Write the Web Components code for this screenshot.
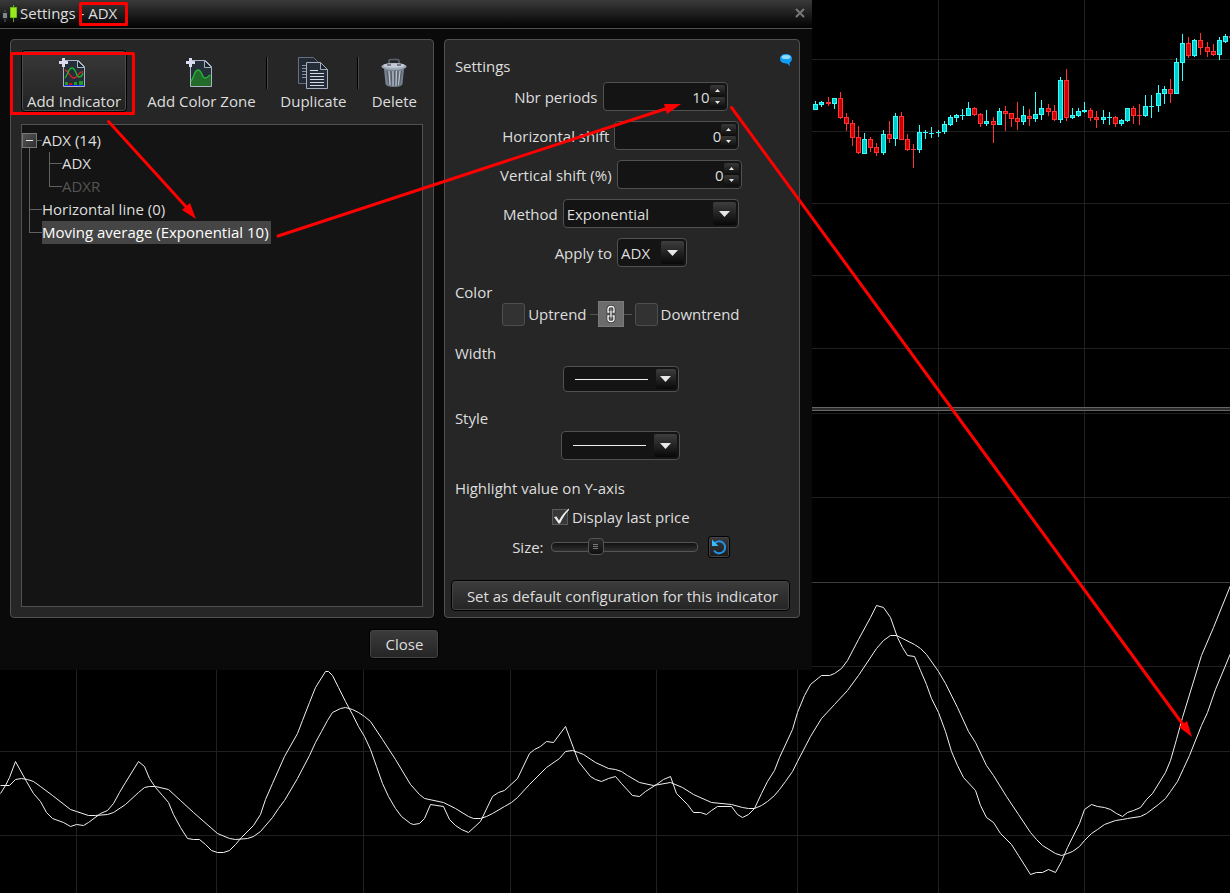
<!DOCTYPE html>
<html lang="en">
<head>
<meta charset="utf-8">
<meta name="viewport" content="width=device-width, initial-scale=1">
<title>Settings - ADX</title>
<style>
  :root {
    --edge: #515151;
    --panel: #262626;
    --well: #141414;
    --text: #dedede;
    --mark: #ff0000;
  }
  html, body { margin: 0; min-height: 100vh; background: #000; }
  body {
    position: relative;
    overflow: hidden;
    color: var(--text);
    font: 15px/20px "Open Sans", "Noto Sans", sans-serif;
  }
</style>
</head>
<body>
<price-chart></price-chart>
<settings-dialog></settings-dialog>
<note-layer></note-layer>

<script>
const define = (name, html, setup) => {
  const tpl = document.createElement('template');
  tpl.innerHTML = html;
  customElements.define(name, class extends HTMLElement {
    constructor() {
      super();
      this.attachShadow({ mode: 'open' }).append(tpl.content.cloneNode(true));
    }
    connectedCallback() {
      if (setup && !this.ready) { this.ready = true; setup(this, this.shadowRoot); }
    }
  });
};

/* ---------- chart behind the dialog ---------- */
// x, high, top, bottom, low, direction (1 = up)
const CANDLES = [
  [815,101,104,110,110,1],[821,101,102,105,107,1],[828,97,102,104,106,0],[834,98,98,104,109,1],[840,92,98,118,119,0],
  [846,113,117,124,131,0],[852,120,123,138,146,0],[858,126,137,153,154,0],[864,133,139,154,154,1],[870,137,139,148,152,0],
  [876,143,147,153,156,0],[883,130,134,153,155,1],[889,121,134,139,143,0],[895,113,116,139,146,1],[901,112,116,140,140,0],
  [907,134,139,150,151,0],[913,144,149,150,168,0],[919,125,132,150,153,1],[925,130,132,133,139,1],[931,127,133,134,138,1],
  [938,130,132,133,137,1],[944,121,124,132,134,1],[950,115,117,125,126,1],[956,114,115,118,122,1],[962,109,115,116,120,1],
  [968,102,108,116,116,1],[974,107,108,115,116,0],[980,113,114,124,127,0],[986,110,121,124,126,1],[993,117,121,125,143,0],
  [999,108,111,125,125,1],[1005,106,111,114,131,0],[1011,113,113,119,127,0],[1017,102,118,122,130,0],
  [1023,106,115,122,125,1],[1029,109,116,119,126,0],[1035,92,114,119,122,1],[1041,100,108,115,120,1],[1048,104,108,112,116,0],
  [1054,105,111,120,121,0],[1060,77,80,120,123,1],[1066,69,80,118,121,0],[1072,108,115,118,119,1],[1078,108,111,116,117,1],
  [1084,102,110,112,113,1],[1090,108,110,118,121,0],[1096,111,117,120,128,0],[1103,110,117,120,124,1],[1109,112,117,118,125,1],
  [1115,116,117,124,127,0],[1121,119,120,124,126,1],[1127,108,108,121,122,1],[1133,106,108,116,124,0],[1139,104,115,116,125,0],
  [1145,95,106,116,117,1],[1151,95,106,107,118,1],[1158,85,93,106,112,1],[1164,86,89,94,104,1],[1170,79,89,94,103,0],
  [1176,58,62,94,94,1],[1182,34,43,63,81,1],[1188,37,43,56,58,0],[1194,39,40,56,57,1],[1200,33,40,48,55,0],
  [1207,42,47,52,57,0],[1213,44,51,55,56,0],[1219,37,40,55,60,1],[1225,34,36,42,43,1],[1231,36,36,38,38,0]
];
const ADX = '0,793 5,785 9,777 15,761 26,781 33,793 40,801 46,812 52,818 63,822 70,826 76,824 83,825 88,822 100,813 107,810 113,803 119,792 125,782 138,761 144,766 149,778 155,787 162,795 168,802 173,814 180,827 187,838 193,839 199,839 205,844 211,850 217,852 223,852 229,850 235,844 241,837 253,825 260,814 265,799 272,783 284,756 297,733 302,720 309,702 315,687 325,671 328,671 332,675 338,687 345,701 352,714 358,726 364,736 370,749 376,766 382,783 388,796 395,808 401,816 410,823 413,824 419,823 424,818 430,804 443,806 449,819 455,825 461,829 468,832 480,821 492,796 498,792 504,790 517,778 529,753 534,749 540,746 546,741 553,742 565,726 578,761 590,776 595,779 601,781 608,778 615,776 621,783 632,795 639,796 645,791 656,784 663,779 670,776 676,793 687,804 693,812 700,812 706,814 711,810 717,806 731,806 737,814 742,817 748,814 754,808 761,793 767,781 774,770 779,757 792,729 797,712 804,695 810,684 821,675 829,675 834,673 841,668 847,660 858,639 870,617 876,605 883,607 890,617 897,637 902,647 907,655 914,656 920,670 926,684 931,698 938,712 945,731 951,751 957,765 963,777 975,790 980,805 986,817 993,822 1000,833 1011,844 1018,855 1030,874 1036,872 1042,872 1048,869 1055,872 1061,861 1067,847 1079,823 1084,809 1091,804 1097,806 1104,807 1110,809 1116,813 1122,816 1127,812 1133,810 1140,807 1146,799 1152,793 1165,772 1170,760 1176,739 1182,717 1201,655 1213,627 1230,585';
const AVERAGE = '0,785 9,785 15,779 21,778 27,779 33,781 40,786 52,795 70,809 76,811 88,815 95,815 107,814 113,812 125,804 138,792 144,787 149,786 155,786 168,789 180,800 193,812 217,833 229,838 235,839 247,838 253,836 260,831 272,817 278,808 284,800 297,778 309,755 315,742 321,731 327,720 332,712 340,708 345,707 352,709 358,712 364,716 370,721 382,739 395,759 410,784 419,794 424,798 443,802 455,808 468,816 473,818 480,818 486,816 492,813 504,806 511,802 517,797 529,784 546,767 559,758 565,751 572,750 578,752 583,754 595,762 608,768 615,769 621,771 627,775 639,782 653,785 670,782 682,787 693,794 711,802 731,804 742,807 748,808 754,808 761,805 767,801 774,795 779,789 785,781 792,771 797,761 810,736 821,718 834,704 847,690 858,675 876,648 883,640 890,635 896,635 902,638 914,644 920,648 926,654 938,671 945,683 957,707 968,731 975,742 986,765 993,775 1006,796 1018,814 1030,832 1036,839 1042,845 1055,853 1061,855 1067,853 1072,851 1079,846 1084,840 1091,833 1097,829 1104,824 1115,820 1122,819 1127,818 1140,816 1146,813 1158,804 1165,798 1170,791 1177,781 1183,768 1189,755 1201,725 1207,712 1215,689 1230,653';

define('price-chart', `
  <style>
    :host { position: absolute; inset: 0; display: block; }
    svg { display: block; width: 100%; height: 100%; }
  </style>
  <svg viewBox="0 0 1230 893" preserveAspectRatio="xMinYMin slice" role="img" aria-label="Price and ADX chart">
    <g id="grid" fill="#202020"></g>
    <rect x="812" y="407" width="418" height="1" fill="#666"/>
    <rect x="812" y="408" width="418" height="2" fill="#2c2c2c"/>
    <rect x="812" y="410" width="418" height="1" fill="#666"/>
    <g id="candles"></g>
    <g fill="none" stroke="#f0f0f0" stroke-width="1" transform="translate(.5 .5)">
      <polyline points="${ADX}"/><polyline points="${AVERAGE}"/>
    </g>
  </svg>`, (host, root) => {
  const bar = (x, y, w, h, fill) => `<rect x="${x}" y="${y}" width="${w}" height="${h}"${fill ? ` fill="${fill}"` : ''}/>`;
  root.getElementById('grid').innerHTML =
    [76,216,363,510,656,797,938,1084].map(x => bar(x, 0, 1, 893)).join('') +
    [59,131,203,275,348,413,497,666,751,835].map(y => bar(0, y, 1230, 1)).join('') +
    bar(812, 582, 418, 1, '#3c3c3c');
  root.getElementById('candles').innerHTML = CANDLES.map(([x, h, t, b, l, up]) => {
    const edge = up ? '#33ffff' : '#ff3333', fill = up ? '#00cccc' : '#cc0000';
    return bar(x, h, 1, l - h, edge) + bar(x - 2, t, 5, b - t, edge) +
      (b - t > 2 ? bar(x - 1, t + 1, 3, b - t - 2, fill) : '');
  }).join('');
});

/* ---------- red notes over everything ---------- */
define('note-layer', `
  <style>
    :host { position: absolute; inset: 0; display: block; pointer-events: none; }
    svg { display: block; width: 100%; height: 100%; }
  </style>
  <svg viewBox="0 0 1230 893" preserveAspectRatio="xMinYMin slice" aria-hidden="true">
    <g fill="none" stroke="#f00" stroke-width="3" stroke-linejoin="round" stroke-linecap="round">
      <rect x="80.500" y="3.500" width="46" height="21"/>
      <rect x="11.500" y="53.500" width="122" height="60"/>
      <path d="M108.500 121.500L188 209M278 236L668 108M731.500 107.500L1184 726"/>
    </g>
    <g fill="#f00">
      <path d="M196 219L182 210L190 203z"/>
      <path d="M681 104L667 114L664 104z"/>
      <path d="M1192 737L1179 727L1187 721z"/>
    </g>
  </svg>`);

/* ---------- shared pieces ---------- */
define('group-panel', `
  <style>
    :host {
      display: flex; flex-direction: column; box-sizing: border-box; min-width: 0;
      background: var(--panel); border: 1px solid var(--edge); border-radius: 4px;
    }
  </style>
  <slot></slot>`);

define('push-button', `
  <style>
    :host { display: block; }
    button {
      width: 100%; height: var(--button-height, 31px); padding: 0 15px; cursor: pointer;
      font: inherit; color: inherit; white-space: nowrap;
      background: linear-gradient(#3c3c3c, #242424);
      border: 1px solid #000; border-radius: 4px;
      box-shadow: inset 0 0 0 1px #444;
    }
  </style>
  <button type="button"><slot></slot></button>`);

define('tool-button', `
  <style>
    :host { display: block; position: relative; }
    button {
      display: flex; flex-direction: column; align-items: center; gap: 2px;
      width: 100%; height: 62px; padding: 6px 0 0; cursor: pointer;
      font: inherit; color: inherit; white-space: nowrap;
      background: none; border: 1px solid transparent; border-radius: 4px;
    }
    :host([active]) button {
      background: linear-gradient(#383838, #222);
      border-color: #000; box-shadow: inset 0 0 0 1px #4c4c4c;
    }
    :host([divided])::after {
      content: ""; position: absolute; right: 0; top: 7px; width: 1px; height: 32px;
      background: #000; border-right: 1px solid #484848;
    }
    ::slotted(svg) { display: block; width: 32px; height: 32px; }
  </style>
  <button type="button"><slot name="icon"></slot><slot></slot></button>`);

define('tool-bar', `
  <style>
    :host { display: grid; grid-template-columns: 106fr 141fr 91fr 71fr; padding: 10px 3px 0 10px; }
    .zone { padding-left: 8px; }
  </style>
  <tool-button active>
    <svg slot="icon" viewBox="2 0 32 32">
      <path d="M7.500 3.500h15l6 6v20h-21z" fill="#242f3a" stroke="#a9b4c4"/>
      <path d="M21.500 3.500v7h7z" fill="#1a222b" stroke="#a9b4c4"/>
      <path d="M9 13c4 1 5 8 9 8s4-7 9-6" fill="none" stroke="#d22" stroke-width="1.300"/>
      <path d="M9 21c3-3 3-10 7-10s4 9 7 9 3-2 4-4" fill="none" stroke="#1fb52a" stroke-width="1.300"/>
      <path d="M9 25h3v3H9zM18 25h3v3h-3zM23 24h4v4h-4z" fill="#18a022"/>
      <path d="M13 26h3v2h-3z" fill="#c11"/><path d="M8 28h20v1H8z" fill="#22f"/>
      <path d="M6 1h3v3h3v3H9v3H6V7H3V4h3z" fill="#dadaf0"/>
    </svg>Add Indicator</tool-button>
  <tool-button divided class="zone">
    <svg slot="icon" viewBox="2 0 32 32">
      <path d="M7.500 3.500h15l6 6v20h-21z" fill="#242f3a" stroke="#a9b4c4"/>
      <path d="M21.500 3.500v7h7z" fill="#1a222b" stroke="#a9b4c4"/>
      <path d="M8 24c3-3 3-11 7-11s4 8 7 8 3-2 5-3l1-1v12H8z" fill="#246b2b"/>
      <path d="M8 24c3-3 3-11 7-11s4 8 7 8 3-2 5-3" fill="none" stroke="#25b735" stroke-width="1.300"/>
      <path d="M6 1h3v3h3v3H9v3H6V7H3V4h3z" fill="#dadaf0"/>
    </svg>Add Color Zone</tool-button>
  <tool-button divided>
    <svg slot="icon" viewBox="0 0 32 32">
      <path d="M1.500.500h15l4 4v22h-19z" fill="#222a33" stroke="#667080"/>
      <path d="M5 8.500h6M5 11.500h6M5 14.500h6M5 17.500h6M5 20.500h6" stroke="#8a929e"/>
      <path d="M9.500 5.500h14l7 7v19h-21z" fill="#242d38" stroke="#a4afbf"/>
      <path d="M23.500 5.500v7h7z" fill="#1a222b" stroke="#a4afbf"/>
      <path d="M13 13.500h8M13 16.500h14M13 19.500h14M13 22.500h14M13 25.500h14M13 28.500h14" stroke="#d5d9e6"/>
    </svg>Duplicate</tool-button>
  <tool-button>
    <svg slot="icon" viewBox="0 0 32 32">
      <path d="M11 7V4q0-1.500 2-1.500h6q2 0 2 1.500v3" fill="none" stroke="#59616e" stroke-width="1.600"/>
      <path d="M6 12h20l-1.500 15q-1 3-8.500 3t-8.500-3z" fill="#77818e"/>
      <path d="M9 14l2 14M13 14l1 15M16.500 14v15M20 14l-1 15M23.500 14l-2 14" stroke="#56606d" stroke-width="1.200"/>
      <path d="M11 14l1 14M15 14v15M18.500 14l-.500 15M22 14l-1.500 14" stroke="#c1c9d3"/>
      <ellipse cx="16" cy="9.500" rx="12.500" ry="3.600" fill="#9ca8b5"/>
      <ellipse cx="16" cy="8.500" rx="10.500" ry="2.300" fill="#c3ccd5"/>
      <path d="M9 8h4M19 8h4" stroke="#625878" stroke-width="1.500"/>
    </svg>Delete</tool-button>`);

/* ---------- tree of indicators ---------- */
define('indicator-tree', `
  <style>
    :host {
      display: block; flex: 1; margin: 12px 10px 10px; padding-top: 4px;
      background: var(--well); border: 1px solid var(--edge);
    }
    ul { list-style: none; margin: 0; padding: 0; }
    li { position: relative; line-height: 23px; }
    .top { padding-left: 20px; }
    .sub { padding-left: 20px; }
    /* connector lines */
    li::before { content: ""; position: absolute; left: 7px; top: 11px; width: 13px; border-top: 1px solid #616161; }
    li::after { content: ""; position: absolute; left: 7px; top: 0; bottom: 0; border-left: 1px solid #616161; }
    li:last-child::after { bottom: auto; height: 11px; }
    .open::after { top: 18px; }
    button {
      position: absolute; z-index: 1; left: 0; top: 4px; width: 15px; height: 15px; padding: 0;
      background: linear-gradient(135deg, #555, #2e2e2e); border: 1px solid #777;
    }
    button::before { content: ""; display: block; width: 7px; height: 1px; margin: 0 auto; background: #eee; }
    .off { color: #555; }
    .picked { display: inline-block; padding-right: 2px; color: #fff; background: #454545; }
  </style>
  <ul>
    <li class="top open"><button type="button" aria-label="Collapse"></button>ADX (14)
      <ul><li class="sub">ADX</li><li class="sub off">ADXR</li></ul>
    </li>
    <li class="top">Horizontal line (0)</li>
    <li class="top"><span class="picked">Moving average (Exponential 10)</span></li>
  </ul>`);

/* ---------- form fields ---------- */
define('spin-field', `
  <style>
    :host { display: flex; justify-content: center; align-items: center; gap: 5px; }
    .box {
      display: flex; box-sizing: border-box; width: 125px; height: 29px; padding: 2px;
      background: var(--well); border: 1px solid var(--edge); border-radius: 4px;
    }
    input {
      flex: 1; min-width: 0; padding: 0; border: 0; outline: 0; background: none;
      color: inherit; font: inherit; text-align: right; appearance: textfield;
    }
    input::-webkit-inner-spin-button { appearance: none; margin: 0; }
    .steps { display: grid; grid-template-rows: 1fr 1fr; width: 15px; }
    button {
      display: grid; place-items: center; padding: 0; border: 0; border-radius: 2px;
      background: linear-gradient(#383838, #0c0c0c);
    }
    svg { width: 5px; height: 3px; fill: #e8e8e8; }
  </style>
  <label for="value"></label>
  <div class="box">
    <input id="value" type="number">
    <div class="steps">
      <button type="button" aria-label="Increase"><svg viewBox="0 0 5 3"><path d="M0 3L2.500 0L5 3z"/></svg></button>
      <button type="button" aria-label="Decrease"><svg viewBox="0 0 5 3"><path d="M0 0L2.500 3L5 0z"/></svg></button>
    </div>
  </div>`, (host, root) => {
  const input = root.querySelector('input');
  root.querySelector('label').textContent = host.getAttribute('label');
  input.value = host.getAttribute('value');
  const [up, down] = root.querySelectorAll('button');
  up.onclick = () => input.stepUp();
  down.onclick = () => input.stepDown();
});

define('pick-field', `
  <style>
    :host { display: flex; justify-content: center; align-items: center; gap: 5px; }
    .box {
      display: grid; grid-template-columns: 1fr auto; box-sizing: border-box;
      width: var(--pick-width); height: var(--pick-height, 29px); padding: 2px;
      background: var(--well); border: 1px solid var(--edge); border-radius: 4px;
    }
    select {
      grid-area: 1 / 1 / 2 / 3; min-width: 0; padding: 0 0 0 1px; border: 0; outline: 0;
      appearance: none; background: none; color: inherit; font: inherit;
    }
    option { background: #141414; }
    .arrow {
      grid-area: 1 / 2; display: grid; place-items: center; height: 100%; aspect-ratio: 1;
      border-radius: 2px; background: linear-gradient(#3e3e3e, #080808); pointer-events: none;
    }
    svg { width: 11px; height: 6px; fill: #e8e8e8; }
    .line { display: none; }
    :host([line]) .line {
      display: block; grid-area: 1 / 1; align-self: center; margin: 0 8px 0 9px;
      border-top: 1px solid #eee; pointer-events: none;
    }
  </style>
  <label for="choice"></label>
  <div class="box">
    <select id="choice"><option></option></select>
    <span class="line"></span>
    <span class="arrow"><svg viewBox="0 0 11 6"><path d="M0 0h11L5.500 6z"/></svg></span>
  </div>`, (host, root) => {
  const label = root.querySelector('label'), select = root.querySelector('select');
  if (host.hasAttribute('line')) {
    label.remove();
    select.setAttribute('aria-label', host.getAttribute('line'));
  } else {
    label.textContent = host.getAttribute('label');
    select.options[0].textContent = host.getAttribute('value');
  }
});

define('color-pair', `
  <style>
    :host { display: flex; justify-content: center; align-items: center; height: 24px; }
    label { display: flex; align-items: center; gap: 3px; }
    input {
      appearance: none; box-sizing: border-box; width: 23px; height: 23px; margin: 0; padding: 0;
      background: #323232; border: 1px solid #4e4e4e; border-radius: 3px;
    }
    input::-webkit-color-swatch-wrapper { display: none; }
    i { width: 8px; border-top: 1px solid #555; margin-left: 3px; }
    button + i { margin: 0 3px 0 0; }
    button { display: grid; place-items: center; width: 26px; height: 26px; padding: 0; border: 1px solid #7a7a7a; background: #6c6c6c; }
    svg { width: 10px; height: 18px; }
  </style>
  <label><input type="color">Uptrend</label>
  <i></i>
  <button type="button" aria-label="Link colors">
    <svg viewBox="0 0 10 18" fill="none">
      <path d="M3.500 7H2V4q0-2.500 3-2.500T8 4v3H6.500M3.500 11H2v3q0 2.500 3 2.500T8 14v-3H6.500M5 5.500v7" stroke="#3a3a3a" stroke-width="3"/>
      <path d="M3.500 7H2V4q0-2.500 3-2.500T8 4v3H6.500M3.500 11H2v3q0 2.500 3 2.500T8 14v-3H6.500M5 5.500v7" stroke="#fff" stroke-width="1.300"/>
    </svg>
  </button>
  <i></i>
  <label><input type="color">Downtrend</label>`);

define('tick-field', `
  <style>
    :host { display: flex; justify-content: center; }
    label { display: flex; align-items: center; gap: 2px; }
    .box { display: grid; width: 18px; height: 20px; align-items: center; }
    input {
      grid-area: 1 / 1; appearance: none; box-sizing: border-box; width: 16px; height: 16px; margin: 0;
      background: #383838; border: 1px solid #5a5a5a;
    }
    svg { grid-area: 1 / 1; width: 18px; height: 18px; visibility: hidden; pointer-events: none; }
    input:checked + svg { visibility: visible; }
  </style>
  <label><span class="box"><input type="checkbox" checked>
    <svg viewBox="0 0 18 18"><path d="M2 9l2.500-.500 2.500 4Q11 5 17 0.500V2Q12 7 8 15.500H6.500z" fill="#eee"/></svg></span><slot></slot></label>`);

define('size-field', `
  <style>
    :host { display: flex; justify-content: center; align-items: center; }
    input { appearance: none; width: 147px; height: 18px; margin: 0 10px 0 7px; background: none; }
    input::-webkit-slider-runnable-track {
      box-sizing: border-box; height: 10px; border: 1px solid #555; border-radius: 4px;
      background: linear-gradient(#111, #303030);
    }
    input::-webkit-slider-thumb {
      appearance: none; box-sizing: border-box; width: 16px; height: 17px; margin-top: -5px;
      border: 1px solid #555; border-radius: 4px;
      background:
        linear-gradient(#777, #777) center 5px / 5px 1px no-repeat,
        linear-gradient(#777, #777) center 7px / 5px 1px no-repeat,
        linear-gradient(#777, #777) center 9px / 5px 1px no-repeat,
        linear-gradient(#2c2c2c, #111);
    }
    button {
      display: grid; place-items: center; width: 22px; height: 22px; padding: 0;
      background: linear-gradient(#3a3a3a, #1c1c1c); border: 1px solid #000; border-radius: 3px;
      box-shadow: inset 0 0 0 1px #444;
    }
    svg { width: 16px; height: 16px; }
  </style>
  <label for="size">Size:</label>
  <input id="size" type="range" min="0" max="100" value="28">
  <button type="button" aria-label="Reset">
    <svg viewBox="0 0 16 16"><path d="M3.500 4.500A6 6 0 1 1 3 11.500" fill="none" stroke="#2193ea" stroke-width="2"/><path d="M1 0.500V7h6.500z" fill="#3ab9ff"/></svg>
  </button>`);

define('indicator-form', `
  <style>
    :host { display: flex; flex-direction: column; flex: 1; padding: 16px 10px 6px; }
    header { display: flex; justify-content: space-between; align-items: flex-start; height: 26px; }
    header svg { width: 14px; height: 14px; margin: -3px -4px 0 0; }
    h2 { margin: 0; font: inherit; }
    .rows { display: grid; gap: 10px; margin-bottom: 15px; }
    color-pair { margin-bottom: 17px; }
    .rows, color-pair, [line], tick-field, size-field { padding-right: 2px; }
    [line] { margin: 3px 0 16px; }
    [line="Style"] { margin-bottom: 18px; }
    tick-field { margin: 9px 0; }
    push-button { margin: auto -1px 0 -4px; }
  </style>
  <header><h2>Settings</h2>
    <svg viewBox="0 0 14 14" role="img" aria-label="Comment">
      <path d="M7 1c3.500 0 6 2 6 4.800 0 1.800-1.200 3.200-2.500 4l.500 3.200-3-2.500H7c-3.500 0-6-2-6-4.700S3.500 1 7 1z" fill="#109df5"/>
      <ellipse cx="7" cy="4" rx="4.500" ry="2" fill="#8fdcff"/>
    </svg>
  </header>
  <div class="rows">
    <spin-field label="Nbr periods" value="10"></spin-field>
    <spin-field label="Horizontal shift" value="0"></spin-field>
    <spin-field label="Vertical shift (%)" value="0"></spin-field>
    <pick-field label="Method" value="Exponential" style="--pick-width:176px"></pick-field>
    <pick-field label="Apply to" value="ADX" style="--pick-width:70px"></pick-field>
  </div>
  <h2>Color</h2>
  <color-pair></color-pair>
  <h2>Width</h2>
  <pick-field line="Width" style="--pick-width:116px;--pick-height:26px"></pick-field>
  <h2>Style</h2>
  <pick-field line="Style" style="--pick-width:119px"></pick-field>
  <h2>Highlight value on Y-axis</h2>
  <tick-field>Display last price</tick-field>
  <size-field></size-field>
  <push-button>Set as default configuration for this indicator</push-button>`);

/* ---------- the dialog ---------- */
define('title-bar', `
  <style>
    :host {
      display: flex; align-items: center; gap: 3px; box-sizing: border-box; height: 29px; padding: 0 6px 2px 2px;
      background: linear-gradient(#3a3a3a, #050505 26px); border-bottom: 1px solid #505050;
    }
    svg { width: 15px; height: 17px; }
    h1 { flex: 1; margin: 0; font: inherit; }
    button { width: 12px; height: 12px; padding: 0; border: 0; background: none; display: grid; place-items: center; }
    button svg { width: 10px; height: 10px; }
  </style>
  <svg viewBox="0 0 15 17" aria-hidden="true">
    <path d="M3 5v12" stroke="#56616d"/><path d="M11.500 0v17" stroke="#5faa1a"/>
    <path d="M.500 7.500h5v6h-5z" fill="#7d8790" stroke="#222"/>
    <path d="M8.500 2.500h6v10h-6z" fill="#9be821" stroke="#68c010"/>
  </svg>
  <h1><slot></slot></h1>
  <button type="button" aria-label="Close window"><svg viewBox="0 0 10 10"><path d="M1 1l8 8M9 1l-8 8" stroke="#777" stroke-width="2"/></svg></button>`);

define('settings-dialog', `
  <style>
    :host { position: relative; display: block; width: 66%; min-width: 780px; background: #0a0a0a; }
    .body { display: grid; grid-template-columns: 424fr 356fr; gap: 10px; padding: 10px 12px 11px 10px; }
    group-panel { min-height: 579px; }
    footer { display: flex; justify-content: center; padding: 0 3px 11px 0; }
    footer push-button { --button-height: 30px; }
  </style>
  <title-bar>Settings - ADX</title-bar>
  <div class="body">
    <group-panel><tool-bar></tool-bar><indicator-tree></indicator-tree></group-panel>
    <group-panel><indicator-form></indicator-form></group-panel>
  </div>
  <footer><push-button>Close</push-button></footer>`);
</script>
</body>
</html>
